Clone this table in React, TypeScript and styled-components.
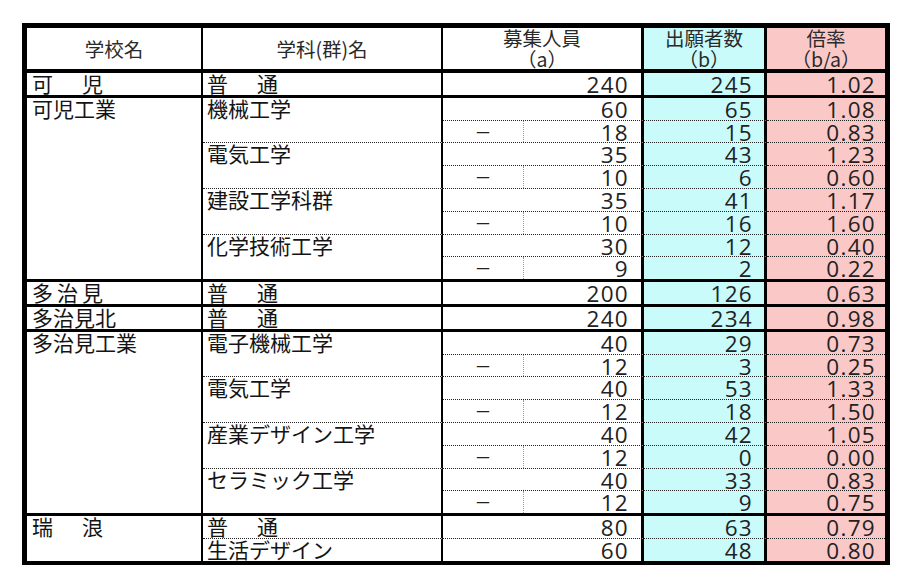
import styled, { createGlobalStyle } from "styled-components";

const GlobalStyle = createGlobalStyle`
  html, body {
    margin: 0;
    padding: 0;
    background: #fff;
  }
  body {
    font-family: "Noto Sans CJK JP", "Noto Sans", sans-serif;
    color: #141414;
  }
`;

type Edge = "solid" | "dotted" | "none";

const ROW_H = 21.8;

const edgeCss = (e: Edge) =>
  e === "solid" ? "3px solid #000" : e === "dotted" ? "1px dotted #222" : "none";
const edgeW = (e: Edge) => (e === "solid" ? 3 : e === "dotted" ? 1 : 0);

// column: right border width, bg, number right padding
const COLS = [
  { right: 2, bg: "#fff", pad: 0 },
  { right: 2, bg: "#fff", pad: 0 },
  { right: 3, bg: "#fff", pad: 12 },
  { right: 3, bg: "#c9fbfb", pad: 11 },
  { right: 0, bg: "#fbc8c8", pad: 9 },
];

const Page = styled.div`
  padding: 23px 0 0 22px;
`;

const Table = styled.div`
  display: grid;
  grid-template-columns: 176px 240px 201px 123px 118px;
  width: 858px;
  border: 5px solid #000;
  border-bottom-width: 4px;
`;

const HeadCell = styled.div<{ $col: number }>`
  box-sizing: border-box;
  height: 45px;
  display: flex;
  flex-direction: column;
  align-items: center;
  justify-content: center;
  border-right: ${(p) => COLS[p.$col].right}px solid #000;
  border-bottom: 4px solid #000;
  background: ${(p) => COLS[p.$col].bg};
  color: #2a2a2a;
  font-size: 19.5px;
  overflow: hidden;
`;

const HeadLine = styled.span`
  display: block;
  height: 20.5px;
  line-height: 20.5px;
`;

const NameCell = styled.div<{ $col: number; $span: number; $edge: Edge }>`
  box-sizing: border-box;
  grid-column: ${(p) => p.$col + 1};
  grid-row: span ${(p) => p.$span};
  border-right: ${(p) => COLS[p.$col].right}px solid #000;
  border-bottom: ${(p) => edgeCss(p.$edge)};
  padding-left: ${(p) => (p.$col === 0 ? 5 : 4)}px;
  font-size: 21px;
  line-height: ${ROW_H}px;
  white-space: nowrap;
`;

const Label = styled.span<{ $spread: number }>`
  letter-spacing: ${(p) => p.$spread}px;
`;

const NumCell = styled.div<{ $col: number; $edge: Edge }>`
  box-sizing: border-box;
  grid-column: ${(p) => p.$col + 1};
  height: ${(p) => ROW_H + edgeW(p.$edge)}px;
  display: flex;
  border-right: ${(p) => COLS[p.$col].right}px solid #000;
  border-bottom: ${(p) => edgeCss(p.$edge)};
  background: ${(p) => COLS[p.$col].bg};
`;

const DashPart = styled.div`
  width: 80px;
  flex: none;
  border-right: 1px dotted #9a9a9a;
  text-align: center;
  font-size: 17px;
  line-height: ${ROW_H}px;
  color: #222;
`;

const Num = styled.div<{ $pad: number }>`
  flex: 1;
  text-align: right;
  padding: 1px ${(p) => p.$pad}px 0 0;
  font-family: "Open Sans", "Noto Sans", sans-serif;
  font-weight: 400;
  font-size: 22.5px;
  letter-spacing: 1.3px;
  line-height: ${ROW_H}px;
  color: #222;
`;

type Vals = [number, number, string];
type Dept = { name: string; spread?: number; main: Vals; sub?: Vals };
type School = { name: string; spread?: number; depts: Dept[] };

const schools: School[] = [
  {
    name: "可　児",
    spread: 4,
    depts: [{ name: "普　通", spread: 4, main: [240, 245, "1.02"] }],
  },
  {
    name: "可児工業",
    depts: [
      { name: "機械工学", main: [60, 65, "1.08"], sub: [18, 15, "0.83"] },
      { name: "電気工学", main: [35, 43, "1.23"], sub: [10, 6, "0.60"] },
      { name: "建設工学科群", main: [35, 41, "1.17"], sub: [10, 16, "1.60"] },
      { name: "化学技術工学", main: [30, 12, "0.40"], sub: [9, 2, "0.22"] },
    ],
  },
  {
    name: "多治見",
    spread: 4,
    depts: [{ name: "普　通", spread: 4, main: [200, 126, "0.63"] }],
  },
  {
    name: "多治見北",
    depts: [{ name: "普　通", spread: 4, main: [240, 234, "0.98"] }],
  },
  {
    name: "多治見工業",
    depts: [
      { name: "電子機械工学", main: [40, 29, "0.73"], sub: [12, 3, "0.25"] },
      { name: "電気工学", main: [40, 53, "1.33"], sub: [12, 18, "1.50"] },
      { name: "産業デザイン工学", main: [40, 42, "1.05"], sub: [12, 0, "0.00"] },
      { name: "セラミック工学", main: [40, 33, "0.83"], sub: [12, 9, "0.75"] },
    ],
  },
  {
    name: "瑞　浪",
    spread: 4,
    depts: [
      { name: "普　通", spread: 4, main: [80, 63, "0.79"] },
      { name: "生活デザイン", main: [60, 48, "0.80"] },
    ],
  },
];

function NumRow({ vals, edge, dash }: { vals: Vals; edge: Edge; dash: boolean }) {
  return (
    <>
      <NumCell $col={2} $edge={edge}>
        {dash && <DashPart>－</DashPart>}
        <Num $pad={COLS[2].pad}>{vals[0]}</Num>
      </NumCell>
      <NumCell $col={3} $edge={edge}>
        <Num $pad={COLS[3].pad}>{vals[1]}</Num>
      </NumCell>
      <NumCell $col={4} $edge={edge}>
        <Num $pad={COLS[4].pad}>{vals[2]}</Num>
      </NumCell>
    </>
  );
}

export default function App() {
  return (
    <Page>
      <GlobalStyle />
      <Table>
        <HeadCell $col={0}>学校名</HeadCell>
        <HeadCell $col={1}>学科(群)名</HeadCell>
        <HeadCell $col={2}>
          <HeadLine>募集人員</HeadLine>
          <HeadLine>（a）</HeadLine>
        </HeadCell>
        <HeadCell $col={3}>
          <HeadLine>出願者数</HeadLine>
          <HeadLine>（b）</HeadLine>
        </HeadCell>
        <HeadCell $col={4}>
          <HeadLine>倍率</HeadLine>
          <HeadLine>（b/a）</HeadLine>
        </HeadCell>

        {schools.map((s, si) => {
          const lastSchool = si === schools.length - 1;
          const groupEdge: Edge = lastSchool ? "none" : "solid";
          const rows = s.depts.reduce((n, d) => n + (d.sub ? 2 : 1), 0);
          return (
            <>
              <NameCell key={s.name} $col={0} $span={rows} $edge={groupEdge}>
                <Label $spread={s.spread ?? 0}>{s.name}</Label>
              </NameCell>
              {s.depts.map((d, di) => {
                const lastDept = di === s.depts.length - 1;
                const endEdge: Edge = lastDept ? groupEdge : "dotted";
                return (
                  <>
                    <NameCell $col={1} $span={d.sub ? 2 : 1} $edge={endEdge}>
                      <Label $spread={d.spread ?? 0}>{d.name}</Label>
                    </NameCell>
                    <NumRow vals={d.main} edge={d.sub ? "dotted" : endEdge} dash={false} />
                    {d.sub && <NumRow vals={d.sub} edge={endEdge} dash />}
                  </>
                );
              })}
            </>
          );
        })}
      </Table>
    </Page>
  );
}
